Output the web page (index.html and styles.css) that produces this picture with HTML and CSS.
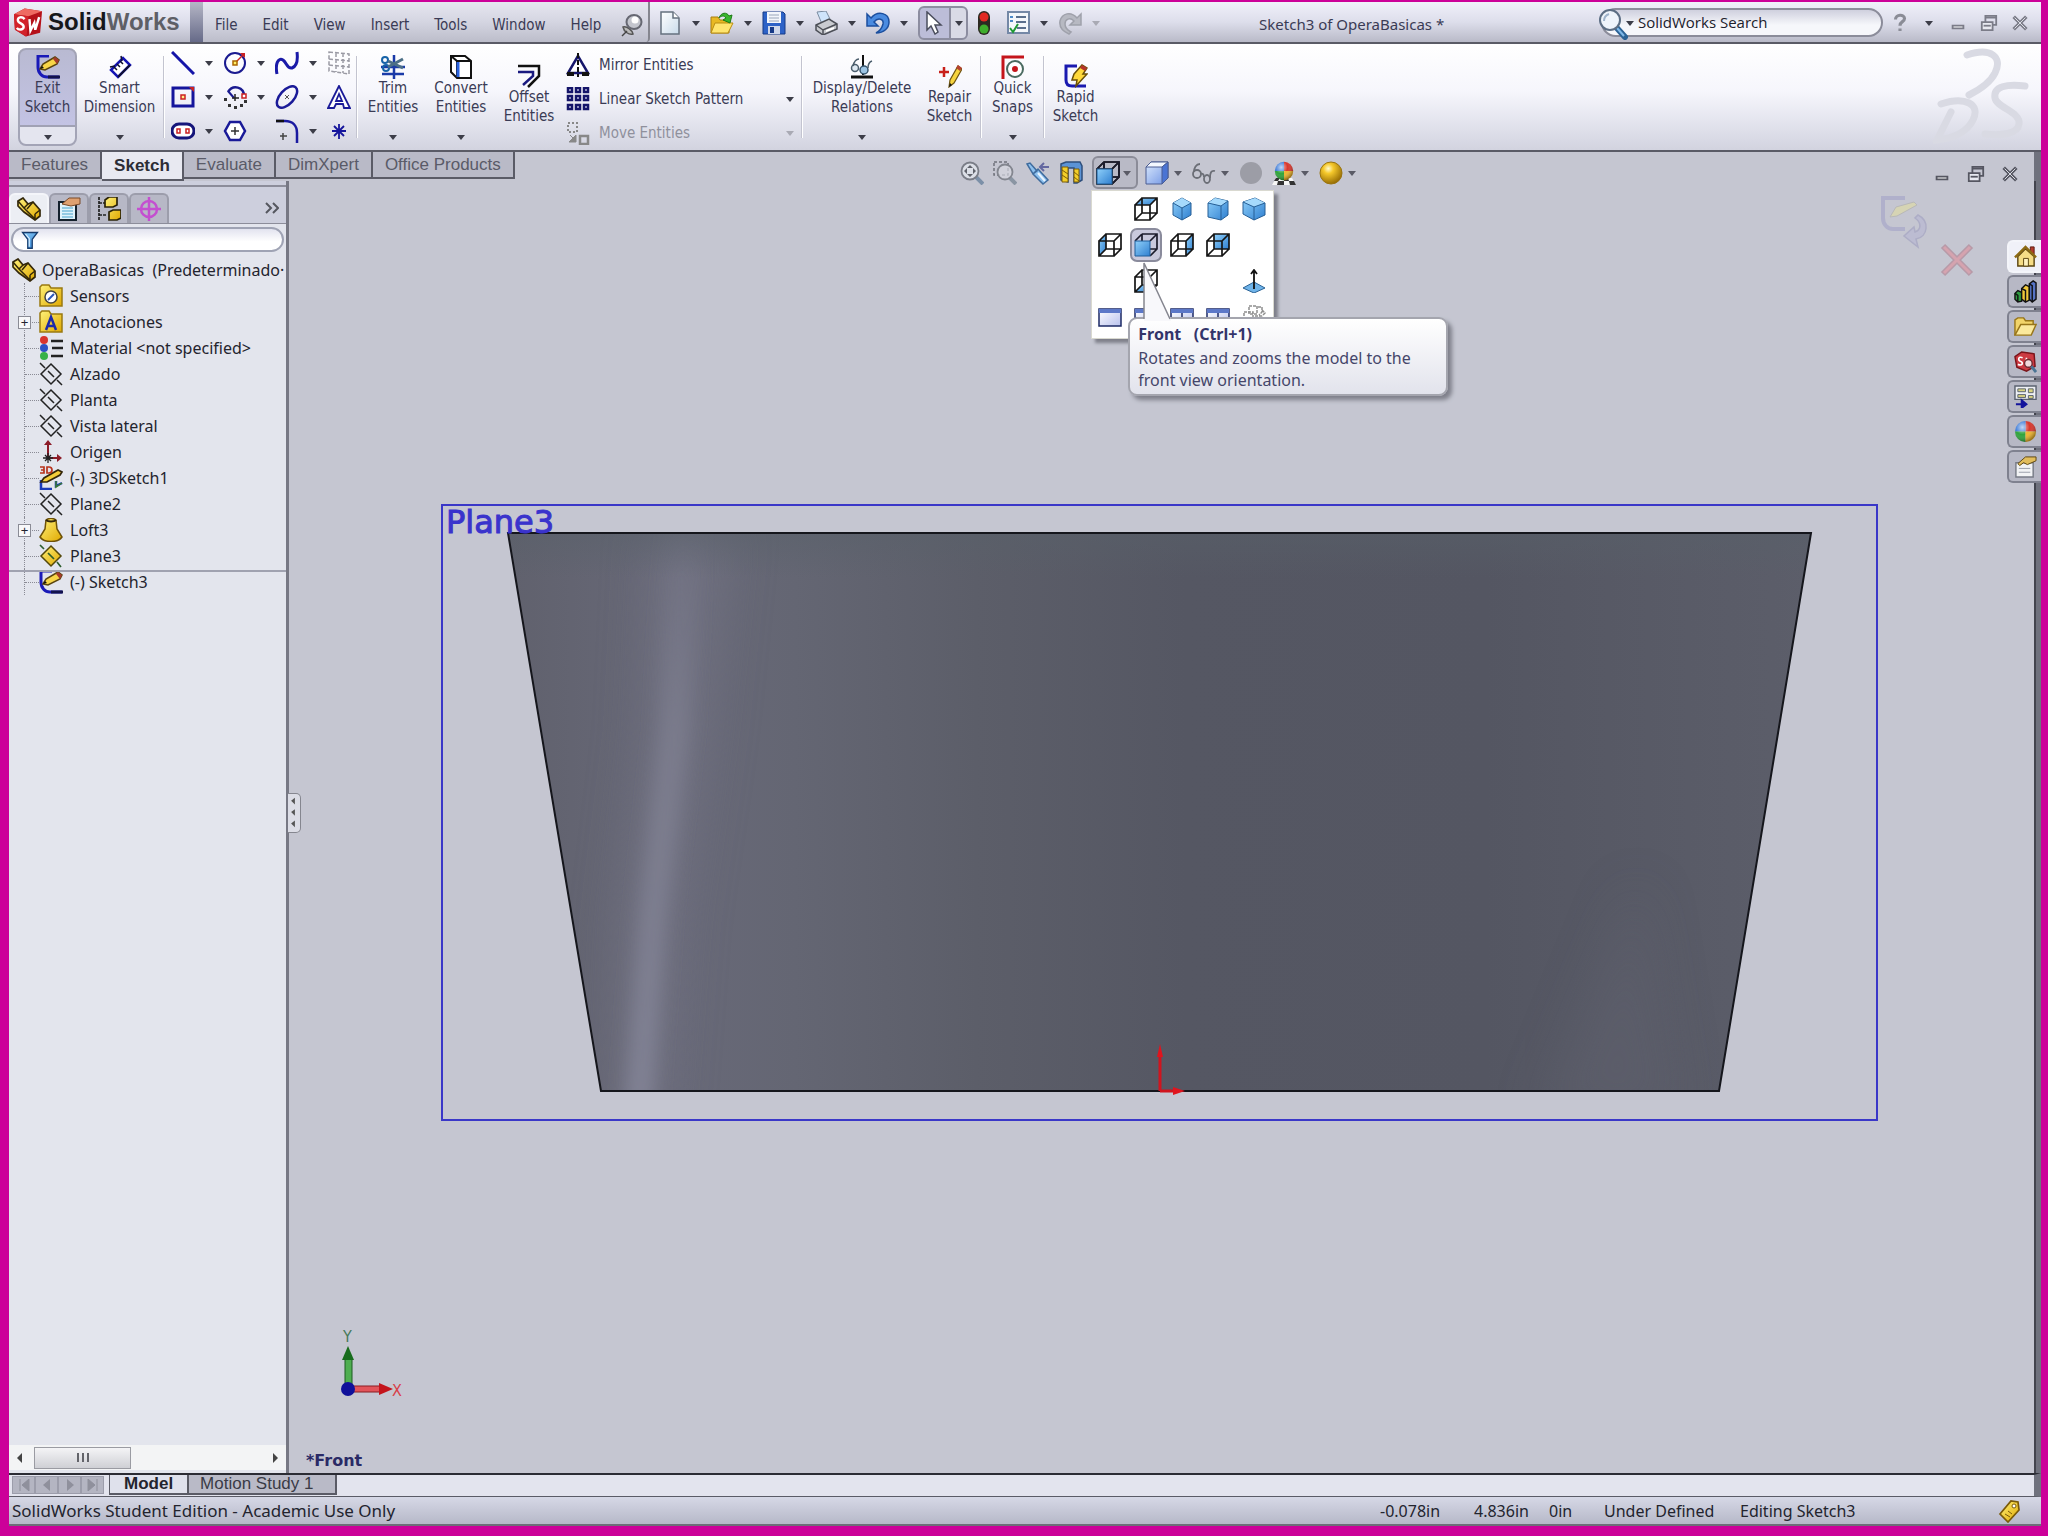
FILE: index.html
```html
<!DOCTYPE html>
<html lang="en">
<head>
  <meta charset="UTF-8" />
  <meta name="viewport" content="width=device-width, initial-scale=1.0"/>
  <title>SolidWorks - Sketch3 of OperaBasicas</title>
  <link rel="stylesheet" href="styles.css">
</head>
<body>

  <!-- Icon sprite -->
  <svg class="sprite" aria-hidden="true">
    <defs>
      <linearGradient id="g-blue" x1="0" y1="0" x2="1" y2="1">
        <stop offset="0" stop-color="#8fd0fa"/><stop offset="1" stop-color="#2f7fd0"/>
      </linearGradient>
      <linearGradient id="g-cube" x1="0" y1="0" x2="1" y2="1">
        <stop offset="0" stop-color="#dceafd"/><stop offset="1" stop-color="#6f94e4"/>
      </linearGradient>
      <linearGradient id="g-yellow" x1="0" y1="0" x2="1" y2="1">
        <stop offset="0" stop-color="#fff27a"/><stop offset="1" stop-color="#e0a800"/>
      </linearGradient>
      <linearGradient id="g-paper" x1="0" y1="0" x2="1" y2="1">
        <stop offset="0" stop-color="#ffffff"/><stop offset="1" stop-color="#c9dbea"/>
      </linearGradient>
      <linearGradient id="g-win" x1="0" y1="0" x2="1" y2="1">
        <stop offset="0" stop-color="#ffffff"/><stop offset="1" stop-color="#b9c2ee"/>
      </linearGradient>
      <radialGradient id="g-gold" cx=".38" cy=".3" r=".75">
        <stop offset="0" stop-color="#fffbd0"/><stop offset=".3" stop-color="#f6c92c"/><stop offset="1" stop-color="#8f6500"/>
      </radialGradient>
      <radialGradient id="g-shine" cx=".35" cy=".3" r=".7">
        <stop offset="0" stop-color="#fff" stop-opacity=".7"/><stop offset=".5" stop-color="#fff" stop-opacity="0"/><stop offset="1" stop-color="#000" stop-opacity=".35"/>
      </radialGradient>
    </defs>

    <symbol id="arrow" viewBox="0 0 14 14"><path d="M3 5h8l-4 5z" fill="currentColor"/></symbol>

    <symbol id="logo" viewBox="0 0 32 32">
      <path d="M1 8L12 2l18 3-2 22-15 4L2 24z" fill="#b5111a"/>
      <path d="M1 8L12 2l18 3-14 5z" fill="#ee6a62"/>
      <path d="M1 8l15 2-2 21L2 24z" fill="#d2222a"/>
      <path d="M12 13c-3-3-7-2-7 1 0 4 6 3 6 7 0 3-5 4-7 1" fill="none" stroke="#fff" stroke-width="2.500"/>
      <path d="M17 13l1 12 4-8 1 7 4-13" fill="none" stroke="#fff" stroke-width="2.500"/>
    </symbol>
    <symbol id="pin" viewBox="0 0 24 24">
      <path d="M3 14c4-1 9 3 10 7-4 1-9-2-10-7z" fill="#bbb" stroke="#555" stroke-width="1.500"/><path d="M7 18l-5 5" stroke="#444" stroke-width="1.500"/>
      <ellipse cx="14" cy="9" rx="7.500" ry="7" fill="#c4c6ce" stroke="#666872" stroke-width="2"/>
      <circle cx="15" cy="7" r="3.500" fill="#fff"/>
    </symbol>

    <!-- Standard toolbar -->
    <symbol id="new" viewBox="0 0 24 24"><path d="M3 1h12l6 6v16H3z" fill="url(#g-paper)" stroke="#66727f" stroke-width="1.500"/><path d="M15 1v6h6" fill="#fff" stroke="#66727f" stroke-width="1.500"/></symbol>
    <symbol id="open" viewBox="0 0 24 24"><path d="M1 22V6h7l2 3h9v13z" fill="#e8b923" stroke="#a87f10"/><path d="M1 22l4-10h18l-5 10z" fill="#ffe56f" stroke="#b98d12"/><path d="M9 7c2-6 8-6 10-2l3-1-2 8-7-3 3-2c-2-3-5-2-7 0z" fill="#39b52d" stroke="#1d7b17"/></symbol>
    <symbol id="save" viewBox="0 0 24 24"><path d="M1 1h20l2 2v20H1z" fill="#2d62c7" stroke="#173a86"/><path d="M5 1h14v11H5z" fill="#f3f6fb"/><path d="M7 4h10M7 7h10M7 10h10" stroke="#9aa6ba"/><path d="M6 15h12v8H6z" fill="#cfd8ea"/><path d="M8 16h4v6H8z" fill="#173a86"/></symbol>
    <symbol id="print" viewBox="0 0 24 24"><path d="M3 1l9-1 5 10-9 3z" fill="#cfe4fb" stroke="#7b8ca0"/><path d="M2 14l13-6 8 5v5L9 24l-7-5z" fill="#c9cbd0" stroke="#4c4f57" stroke-width="1.500"/><path d="M2 14l7 5 14-6M9 19v5" fill="none" stroke="#4c4f57" stroke-width="1.500"/><path d="M12 19l8-3v2l-8 3z" fill="#fff"/></symbol>
    <symbol id="undo" viewBox="0 0 24 24"><path d="M1 3v12h11l-4-4c4-5 10-3 9 2-1 4-3 7-7 9 8 0 13-5 13-11C23 2 12-1 5 7z" fill="#4a8be0" stroke="#1c4f9e" stroke-width="1.500"/></symbol>
    <symbol id="redo" viewBox="0 0 24 24"><path d="M23 3v11H12l4-4c-4-4-9-2-9 3 0 3 2 6 6 8l-2 2C4 20 1 16 2 10 4 2 13 0 19 7z" fill="#b7b9c2" stroke="#9fa1ab" stroke-width="1.500"/></symbol>
    <symbol id="cursor" viewBox="0 0 24 24"><path d="M6 1v18l4-4 4 8 3-2-3-7h6z" fill="#fff" stroke="#4a4d5c" stroke-width="1.500"/></symbol>
    <symbol id="light" viewBox="0 0 24 24"><rect x="6" y="0" width="12" height="24" rx="6" fill="#2c2a22"/><circle cx="12" cy="6" r="4.500" fill="#e02a23"/><circle cx="12" cy="18" r="4.500" fill="#3fae2c"/></symbol>
    <symbol id="options" viewBox="0 0 24 24"><path d="M2 1h21v21H2z" fill="#f4f7fb" stroke="#7488a6" stroke-width="2"/><path d="M4 6h3M4 10h3" stroke="#4c8ac9" stroke-width="2"/><path d="M10 6h10M10 11h10M11 17h9" stroke="#5a6f8d" stroke-width="2"/><path d="M4 17l3 4 5-8" fill="none" stroke="#1f9a34" stroke-width="2"/></symbol>
    <symbol id="lens" viewBox="0 0 32 32"><path d="M19 19l9 10" stroke="#2c6396" stroke-width="6" stroke-linecap="round"/><path d="M20 20l7 8" stroke="#7fb8e8" stroke-width="2"/><circle cx="13" cy="12" r="10" fill="#eef4fb" stroke="#5c6e84" stroke-width="2"/><path d="M7 13c0-4 2-6 5-7" fill="none" stroke="#9fb4cc" stroke-width="2"/></symbol>
    <symbol id="help" viewBox="0 0 20 20"><path d="M5 6c0-6 10-6 10-1 0 4-5 3-5 8M10 16v3" fill="none" stroke="#8a8c96" stroke-width="3.500"/></symbol>
    <symbol id="min" viewBox="0 0 20 20"><path d="M4 13h12v3H4z" fill="#fff" stroke="currentColor" stroke-width="2"/></symbol>
    <symbol id="restore" viewBox="0 0 20 20"><path d="M6 9V2h12v10h-4" fill="none" stroke="currentColor" stroke-width="2"/><path d="M6 4h12" stroke="currentColor" stroke-width="2"/><path d="M2 9h12v9H2z" fill="#e8e9f0" stroke="currentColor" stroke-width="2"/><path d="M4 13h8" stroke="currentColor" stroke-width="2"/></symbol>
    <symbol id="close" viewBox="0 0 20 20"><path d="M3 3l14 14M17 3L3 17" stroke="currentColor" stroke-width="4"/><path d="M4 4l12 12M16 4L4 16" stroke="#e8e9f0" stroke-width="1"/></symbol>

    <!-- Sketch ribbon -->
    <symbol id="sketch" viewBox="0 0 24 24"><path d="M13 1H2v11c0 6 4 10 9 10h12" fill="none" stroke="#1a1ab8" stroke-width="3"/><path d="M12 22h12" stroke="#12124c" stroke-width="3"/><path d="M4 14l3-5L19 2l4 3-2 4L9 15z" fill="#f7d548" stroke="#5a4510" stroke-width="1.500"/><path d="M19 2l4 3-2 4-4-5z" fill="#a53b2c"/><path d="M4 14l4-1-2-2z" fill="#111"/></symbol>
    <symbol id="dimension" viewBox="0 0 24 24"><path d="M3 15L15 3l7 7-12 12z" fill="#fff" stroke="#1414b4" stroke-width="2.500"/><path d="M10 22L22 10" stroke="#101030" stroke-width="2"/><path d="M6 12l3 3M9 9l3 3M12 6l3 3M2 12l5-1M13 1l1 5" stroke="#101030" stroke-width="1.500"/></symbol>
    <symbol id="line" viewBox="0 0 24 24"><path d="M1 1l22 22" stroke="#1515a8" stroke-width="3"/></symbol>
    <symbol id="circle" viewBox="0 0 24 24"><circle cx="12" cy="12" r="10" fill="none" stroke="#1a1a90" stroke-width="2"/><path d="M13 11l7-7" stroke="#c22" stroke-width="1.500"/><path d="M17 2l5 0v5z" fill="#c22"/><path d="M10 10h4v4h-4z" fill="#fe6" stroke="#a60" stroke-width="1.500"/></symbol>
    <symbol id="spline" viewBox="0 0 24 24"><path d="M2 23c-2-10 1-17 6-14 4 3 4 9 9 8 5-2 6-8 5-16" fill="none" stroke="#1a1aa8" stroke-width="3"/></symbol>
    <symbol id="grid" viewBox="0 0 24 24"><path d="M2 1l20 2v20L2 20zM9 2v19M16 2v20M2 8l20 2M2 14l20 2" fill="none" stroke="#9a9aa4" stroke-width="1.500" stroke-dasharray="4 2"/></symbol>
    <symbol id="rect" viewBox="0 0 24 24"><path d="M2 3h20v18H2z" fill="none" stroke="#15159c" stroke-width="3"/><path d="M10 10h4v4h-4z" fill="#fe8" stroke="#c22" stroke-width="1.500"/><path d="M18 2h5v5z" fill="#c22"/></symbol>
    <symbol id="arc" viewBox="0 0 24 24"><path d="M5 7C10-1 21 2 21 11" fill="none" stroke="#1a1a90" stroke-width="2.500"/><path d="M5 6l6 7" stroke="#1a1a90" stroke-width="2"/><path d="M9 13h7M12 9v7" stroke="#222" stroke-width="1.500"/><path d="M19 9h4v4h-4z" fill="#fff" stroke="#c22" stroke-width="1.500"/><path d="M1 13h3v3H1zM5 19h3v3H5zM11 21h3v3h-3zM17 19h3v3h-3zM21 15h3v3h-3z" fill="#333"/></symbol>
    <symbol id="ellipse" viewBox="0 0 24 24"><ellipse cx="12" cy="12" rx="13" ry="7" transform="rotate(-48 12 12)" fill="none" stroke="#1a1a98" stroke-width="2.500"/><path d="M10 10l4 4M14 10l-4 4" stroke="#555"/></symbol>
    <symbol id="text" viewBox="0 0 24 24"><path d="M12 1L1 23h6l2-4h7l1 4h6z" fill="#fff" stroke="#1a1a98" stroke-width="1.800"/><path d="M12 9l-3 7h6z" fill="#fff" stroke="#1a1a98" stroke-width="1.800"/></symbol>
    <symbol id="slot" viewBox="0 0 24 24"><rect x="1" y="5" width="22" height="14" rx="7" fill="#fff" stroke="#15157a" stroke-width="3"/><path d="M6 10h3v4H6zM15 10h3v4h-3z" fill="#fff" stroke="#c22" stroke-width="1.500"/></symbol>
    <symbol id="polygon" viewBox="0 0 24 24"><path d="M7 3h10l5 9-5 9H7l-5-9z" fill="#fff" stroke="#1a1a98" stroke-width="2.500"/><path d="M8 12h8M12 8v8" stroke="#333" stroke-width="1.500"/></symbol>
    <symbol id="fillet" viewBox="0 0 24 24"><path d="M1 2h9c8 0 12 5 12 12v10" fill="none" stroke="#1a1aa0" stroke-width="2.500"/><path d="M1 2h8" stroke="#111" stroke-width="2.500"/><path d="M5 17h7M8 14v7" stroke="#444" stroke-width="1.500"/></symbol>
    <symbol id="point" viewBox="0 0 24 24"><path d="M12 5v15M5 12h14M7 7l10 10M17 7L7 17" stroke="#15159c" stroke-width="1.800"/></symbol>
    <symbol id="trim" viewBox="0 0 24 24"><path d="M13 0v24M0 12h24M1 19h22" stroke="#1a3aa8" stroke-width="2.500"/><circle cx="4" cy="5" r="3" fill="none" stroke="#1763a8" stroke-width="2"/><circle cx="5" cy="13" r="3" fill="none" stroke="#1763a8" stroke-width="2"/><path d="M7 12l15-8M7 6l15 7" stroke="#4c6f86" stroke-width="3"/></symbol>
    <symbol id="convert" viewBox="0 0 24 24"><path d="M2 1h14l6 5v17H8L2 17z" fill="#fff" stroke="#111" stroke-width="2"/><path d="M2 1l6 5h14M8 6v17" fill="none" stroke="#111" stroke-width="2"/><path d="M9 7v15" stroke="#2a63e0" stroke-width="3"/></symbol>
    <symbol id="offset" viewBox="0 0 24 24"><path d="M1 2h21v10L11 23" fill="none" stroke="#111" stroke-width="2.500"/><path d="M1 8h15v4L6 21" fill="none" stroke="#1a1a80" stroke-width="2.500"/></symbol>
    <symbol id="mirror" viewBox="0 0 24 24"><path d="M12 3L2 20h20z" fill="#fff" stroke="#15156a" stroke-width="2.500"/><path d="M1 21h7M16 21h7" stroke="#111" stroke-width="4"/><path d="M12 0v24" stroke="#111" stroke-width="2" stroke-dasharray="5 2"/></symbol>
    <symbol id="pattern" viewBox="0 0 24 24"><g fill="#eef" stroke="#15156a" stroke-width="2.500"><path d="M2 1h4v4H2zM10 1h4v4h-4zM18 1h4v4h-4zM2 9h4v4H2zM10 9h4v4h-4zM18 9h4v4h-4zM2 18h4v4H2zM10 18h4v4h-4zM18 18h4v4h-4z"/></g></symbol>
    <symbol id="move" viewBox="0 0 24 24"><path d="M2 2h9v9H2z" fill="none" stroke="#888" stroke-width="2" stroke-dasharray="2 2"/><path d="M14 15h8v8h-8z" fill="none" stroke="#888" stroke-width="2.500"/><path d="M4 14l4 4M10 14v7H3z" fill="#888" stroke="#888"/></symbol>
    <symbol id="relations" viewBox="0 0 24 24"><path d="M1 22h22" stroke="#111" stroke-width="3"/><path d="M13 0v20" stroke="#111" stroke-width="2"/><circle cx="5" cy="13" r="3.500" fill="#dfe9f2" stroke="#4b5d6c" stroke-width="1.500"/><circle cx="14" cy="15" r="4" fill="#9cc4e4" stroke="#35536c" stroke-width="1.500"/><path d="M3 11c1-4 3-7 6-7M18 13c0-4 1-6 4-7" fill="none" stroke="#4b5d6c" stroke-width="1.500"/></symbol>
    <symbol id="repair" viewBox="0 0 24 24"><path d="M1 8h10M6 3v10" stroke="#c8201a" stroke-width="2.500"/><path d="M11 23l1-7 8-14 4 3-8 14z" fill="#f6d43e" stroke="#6f5510" stroke-width="1.200"/><path d="M20 1l4 3-2 3-4-3z" fill="#b5432f"/><path d="M11 23l1-4 2 2z" fill="#111"/></symbol>
    <symbol id="snaps" viewBox="0 0 24 24"><path d="M2 24V2h21" fill="none" stroke="#c4151b" stroke-width="3"/><circle cx="14" cy="14" r="8" fill="#fff" stroke="#4a6a60" stroke-width="2"/><circle cx="14" cy="14" r="3" fill="#c4151b"/></symbol>
    <symbol id="rapid" viewBox="0 0 24 24"><path d="M13 2H2v14c0 4 2 6 6 6h14" fill="none" stroke="#1a1ab0" stroke-width="3"/><path d="M10 10l8-9 5 3-4 6h4L12 22l1-6H8z" fill="#ffd93b" stroke="#6a4f08" stroke-width="1.500"/><path d="M18 1l5 3-2 3-5-3z" fill="#b5332a"/></symbol>

    <!-- View toolbar -->
    <symbol id="zoomfit" viewBox="0 0 24 24"><path d="M15 15l8 8" stroke="#7c90a8" stroke-width="4"/><circle cx="10" cy="10" r="8.500" fill="#dcdfe7" stroke="#7a7d87" stroke-width="1.800"/><path d="M10 4l3 3H7zM10 16l3-3H7zM4 10l3-3v6zM16 10l-3-3v6z" fill="#5f626b"/></symbol>
    <symbol id="zoomarea" viewBox="0 0 24 24"><path d="M16 16l7 7" stroke="#8a95a3" stroke-width="4"/><path d="M1 1h14v13H1z" fill="none" stroke="#6f727b" stroke-width="1.500" stroke-dasharray="3 2"/><circle cx="12" cy="11" r="7.500" fill="#d5d7df" fill-opacity=".7" stroke="#83868f" stroke-width="1.800"/></symbol>
    <symbol id="prevview" viewBox="0 0 24 24"><path d="M1 3l3-1 7 8-4 3zM7 13l5-5 10 11-5 4z" fill="#8dc0ee" stroke="#3f6c9e" stroke-width="1.500"/><path d="M12 12l7 8" stroke="#e8f4ff" stroke-width="2"/><path d="M14 6h9M18 2l-4 4 4 4" fill="none" stroke="#6468a0" stroke-width="2"/></symbol>
    <symbol id="section" viewBox="0 0 24 24"><path d="M2 3l5-2h14l2 4v14l-5 3h-3V7H9v14l-7-2z" fill="#5b93d6" stroke="#2e4f7c" stroke-width="1.500"/><path d="M3 6h6v15H3zM15 8h5v13h-5z" fill="#f2cf2a" stroke="#7c5d08"/><path d="M3 9l6 4M3 14l6 4M15 11l5 4M15 16l5 4" stroke="#7c5d08"/></symbol>
    <symbol id="wire" viewBox="0 0 24 24"><path d="M1 8h15v15H1zM8 1h15v15H8zM1 8l7-7M16 8l7-7M1 23l7-7M16 23l7-7" fill="none" stroke="#151515" stroke-width="1.700"/></symbol>
    <symbol id="v-front" viewBox="0 0 24 24"><path d="M8 1h15v15l-7 7M8 1L1 8M23 1l-7 7M8 1v8M16 16h7" fill="none" stroke="#1c1c2c" stroke-width="1.700"/><path d="M1 8h15v15H1z" fill="url(#g-blue)" stroke="#1f5c9a"/></symbol>
    <symbol id="v-top" viewBox="0 0 24 24"><path d="M1 8l7-7h15l-7 7z" fill="url(#g-blue)"/><use href="#wire"/></symbol>
    <symbol id="v-left" viewBox="0 0 24 24"><path d="M1 8l7-7v15l-7 7z" fill="url(#g-blue)"/><use href="#wire"/></symbol>
    <symbol id="v-right" viewBox="0 0 24 24"><path d="M16 8l7-7v15l-7 7z" fill="url(#g-blue)"/><use href="#wire"/></symbol>
    <symbol id="v-back" viewBox="0 0 24 24"><path d="M8 1h15v15H8z" fill="url(#g-blue)"/><use href="#wire"/></symbol>
    <symbol id="v-bottom" viewBox="0 0 24 24"><path d="M1 23l7-7h15l-7 7z" fill="url(#g-blue)"/><use href="#wire"/></symbol>
    <symbol id="v-iso" viewBox="0 0 24 24"><path d="M12 1l9 5v12l-9 5-9-5V6z" fill="url(#g-blue)" stroke="#265f96"/><path d="M12 1l9 5-9 5-9-5z" fill="#a6dafc"/><path d="M3 6l9 5 9-5M12 11v12" fill="none" stroke="#265f96"/></symbol>
    <symbol id="v-dim" viewBox="0 0 24 24"><path d="M9 1l13 3v14l-7 5-13-3V6z" fill="url(#g-blue)" stroke="#265f96"/><path d="M9 1l13 3-7 5L2 6z" fill="#a6dafc"/><path d="M2 6l13 3 7-5M15 9v14" fill="none" stroke="#265f96"/></symbol>
    <symbol id="v-tri" viewBox="0 0 24 24"><path d="M13 1l10 5v12l-11 5-11-6V5z" fill="url(#g-blue)" stroke="#265f96"/><path d="M13 1l10 5-11 4L1 5z" fill="#a6dafc"/><path d="M1 5l11 5 11-4M12 10v13" fill="none" stroke="#265f96"/></symbol>
    <symbol id="normal" viewBox="0 0 24 24"><path d="M1 19l11-6 11 6-11 5z" fill="#6fb4ea" stroke="#2a6295"/><path d="M12 20V2M9 5l3-4 3 4" fill="none" stroke="#111" stroke-width="1.800"/></symbol>
    <symbol id="win1" viewBox="0 0 24 24"><path d="M1 4h22v17H1z" fill="url(#g-win)" stroke="#1c2a66" stroke-width="1.500"/><path d="M1 4h22v4H1z" fill="#5c78c8"/></symbol>
    <symbol id="win2" viewBox="0 0 24 24"><use href="#win1"/><path d="M1 13h22" stroke="#1c2a66" stroke-width="1.500"/></symbol>
    <symbol id="win3" viewBox="0 0 24 24"><use href="#win1"/><path d="M12 8v13" stroke="#1c2a66" stroke-width="1.500"/></symbol>
    <symbol id="win4" viewBox="0 0 24 24"><use href="#win3"/><path d="M1 13h22" stroke="#1c2a66" stroke-width="1.500"/></symbol>
    <symbol id="link" viewBox="0 0 24 24"><path d="M7 1h8v8H7zM2 7h9v9H2zM16 2h4v5l-3 3M20 5l3 3-3 3M13 11h8" fill="none" stroke="#8f8f8f" stroke-width="1.500" stroke-dasharray="3 1"/></symbol>
    <symbol id="shaded" viewBox="0 0 24 24"><path d="M1 6l5-5h17v16l-6 6H1z" fill="url(#g-cube)" stroke="#4a5c92"/><path d="M1 6l5-5h17l-6 5z" fill="#f3f8ff" stroke="#4a5c92"/><path d="M17 6l6-5v16l-6 6z" fill="#4a74d4" stroke="#4a5c92"/></symbol>
    <symbol id="glasses" viewBox="0 0 24 24"><g fill="none" stroke="#6b6e76" stroke-width="1.800"><circle cx="5" cy="13" r="4"/><ellipse cx="15" cy="18" rx="3" ry="4"/><path d="M2 11c0-4 2-8 6-8M9 13c1-1 3 0 3 3M18 17c0-5 1-8 5-7"/></g></symbol>
    <symbol id="ball" viewBox="0 0 24 24"><circle cx="12" cy="12" r="11" fill="#9c9da6"/></symbol>
    <symbol id="beach" viewBox="0 0 24 24"><path d="M12 12V1a11 11 0 0 1 11 11z" fill="#d8362c"/><path d="M12 12V1A11 11 0 0 0 1 12z" fill="#3a7ad8"/><path d="M12 12H1a11 11 0 0 0 11 11z" fill="#2fa43c"/><path d="M12 12h11a11 11 0 0 1-11 11z" fill="#f0b52c"/><circle cx="12" cy="12" r="11" fill="url(#g-shine)"/></symbol>
    <symbol id="scene" viewBox="0 0 24 24"><path d="M4 17h16l4 7H0z" fill="#f6f6f6"/><path d="M4 17h4l-2 3H2zM12 17h4l1 3h-5zM6 20h6v4H5zM17 20h5l2 4h-6z" fill="#333"/><use href="#beach" x="2" y="0" width="20" height="20"/></symbol>
    <symbol id="gold" viewBox="0 0 24 24"><circle cx="12" cy="12" r="11" fill="url(#g-gold)" stroke="#9a7410"/></symbol>

    <!-- Feature tree -->
    <symbol id="part" viewBox="0 0 24 24"><path d="M1 4l5-3 5 6 5-2 7 8v6l-5 4L7 15 1 9z" fill="url(#g-yellow)" stroke="#33270a" stroke-width="1.700"/><path d="M1 4l6 7 11 11M7 11l4-4M18 17l5-4M18 17v6M10 12l6-7" fill="none" stroke="#33270a" stroke-width="1.500"/></symbol>
    <symbol id="property" viewBox="0 0 24 24"><path d="M2 5h17v18H2z" fill="#dff2fb" stroke="#14202c" stroke-width="2"/><path d="M5 11h11M5 14h11M5 17h11M5 20h11" stroke="#49a3cc"/><path d="M5 7l7-6h11v6l-9 2z" fill="#dfa070" stroke="#7a4a28"/></symbol>
    <symbol id="config" viewBox="0 0 24 24"><path d="M2 0v24M2 6h6M2 18h8" stroke="#222" stroke-width="1.700" stroke-dasharray="3 1"/><path d="M8 3l4-3h8v8l-4 2H8zM12 15l4-2h8v8l-4 2h-8z" fill="url(#g-yellow)" stroke="#2a2208" stroke-width="1.700"/></symbol>
    <symbol id="dimx" viewBox="0 0 24 24"><circle cx="12" cy="12" r="8" fill="none" stroke="#c44fd0" stroke-width="2.500"/><path d="M12 0v24M0 12h24" stroke="#c44fd0" stroke-width="2.500"/></symbol>
    <symbol id="funnel" viewBox="0 0 24 24"><path d="M2 2h20l-7 9v12H9V11z" fill="url(#g-blue)" stroke="#173c6c" stroke-width="1.700"/><path d="M6 4l5 6v11" fill="none" stroke="#dff1ff" stroke-width="1.500"/></symbol>
    <symbol id="folder" viewBox="0 0 24 24"><path d="M1 22V3l2-2h7l2 3h11v18z" fill="url(#g-yellow)" stroke="#9a7a10" stroke-width="1.500"/></symbol>
    <symbol id="sensors" viewBox="0 0 24 24"><use href="#folder"/><circle cx="12" cy="13" r="6" fill="#fff" stroke="#444" stroke-width="1.500"/><path d="M9 16l6-6" stroke="#2a55b8" stroke-width="2"/></symbol>
    <symbol id="annotations" viewBox="0 0 24 24"><use href="#folder"/><path d="M7 20l5-13 5 13M9 16h6" fill="none" stroke="#1c2aa8" stroke-width="2.500"/></symbol>
    <symbol id="material" viewBox="0 0 24 24"><circle cx="5" cy="4" r="4" fill="#d8332c"/><circle cx="5" cy="12" r="4" fill="#2b50c4"/><circle cx="5" cy="20" r="4" fill="#36b148"/><path d="M12 5h12M13 12h11M12 20h12" stroke="#222" stroke-width="2.500"/></symbol>
    <symbol id="plane" viewBox="0 0 24 24"><path d="M12 2l10 10-10 10L2 12z" fill="none" stroke="#222" stroke-width="1.500"/><path d="M1 1l5 5M9 9l6 6M18 18l5 5" stroke="#222" stroke-width="1.500"/></symbol>
    <symbol id="planesel" viewBox="0 0 24 24"><path d="M12 2l10 10-10 10L2 12z" fill="url(#g-yellow)" stroke="#54480a" stroke-width="1.500"/><path d="M1 1l4 4M9 9l6 6M18 18l4 5" stroke="#2c5c2c" stroke-width="1.700"/></symbol>
    <symbol id="origin" viewBox="0 0 24 24"><path d="M9 18V3M9 18h12" stroke="#8c1c28" stroke-width="2"/><path d="M5 5l4-5 4 5zM18 14l5 4-5 4z" fill="#8c1c28"/><path d="M4 18h10M9 13v10M6 15l6 6M12 15l-6 6" stroke="#222" stroke-width="1.300"/></symbol>
    <symbol id="sketch3d" viewBox="0 0 24 24"><path d="M2 14v9h11M17 15v5l6-3" fill="none" stroke="#1a3ab8" stroke-width="2.500"/><path d="M17 15v6l6-4" fill="none" stroke="#3a7a30" stroke-width="1.500"/><path d="M2 16l3-4L19 4l4 2-2 3L8 16z" fill="#f3cd3a" stroke="#33260a" stroke-width="1.700"/><path d="M1 1h4v6H1M2 4h3M8 1v6h2c4 0 4-6 0-6z" fill="none" stroke="#b8331c" stroke-width="1.700"/></symbol>
    <symbol id="loft" viewBox="0 0 24 24"><path d="M7 2c3-2 7-2 10 0l1 9 5 8c-4 6-18 6-22 0l5-8z" fill="url(#g-yellow)" stroke="#6e5208" stroke-width="1.500"/><path d="M7 2c2 2 8 2 10 0" fill="none" stroke="#33260a" stroke-width="2"/></symbol>

    <!-- Task pane -->
    <symbol id="home" viewBox="0 0 24 24"><path d="M17 2h4v8h-4z" fill="#b33c2c" stroke="#5c1a10"/><path d="M4 12v10h17V12l-9-8z" fill="#f6dd86" stroke="#5b4510" stroke-width="1.500"/><path d="M1 13L12 2l11 11" fill="none" stroke="#8c6a14" stroke-width="2.500"/><path d="M10 14h5v8h-5z" fill="#fff3c0" stroke="#5b4510"/></symbol>
    <symbol id="library" viewBox="0 0 24 24"><g stroke="#111" stroke-width="1.500"><path d="M1 14l3-3 4 2v9l-4 1-3-3z" fill="#2f9a40"/><path d="M8 9l4-4 4 2v14l-4 2-4-3z" fill="#f0c83a"/><path d="M16 4l4-3 3 2v17l-4 3-3-3z" fill="#5673c4"/><path d="M1 14l3 2v7M8 9l4 2v12M16 4l3 2v17" fill="none"/></g></symbol>
    <symbol id="explorer" viewBox="0 0 24 24"><path d="M1 21V5l3-2h6l2 3h8v4" fill="#f2d469" stroke="#98751a" stroke-width="1.500"/><path d="M1 21l6-11h16l-5 11z" fill="#fbe99c" stroke="#98751a" stroke-width="1.500"/></symbol>
    <symbol id="swsearch" viewBox="0 0 24 24"><path d="M1 7l7-5 13 2 1 13-9 5L3 18z" fill="#cc3a42" stroke="#7a141a" stroke-width="1.500"/><path d="M9 8c-5-2-5 3-2 4s2 5-3 3M13 8v9" fill="none" stroke="#fff" stroke-width="1.700"/><circle cx="15" cy="14" r="4" fill="#f0d9dc" stroke="#6f2a30" stroke-width="1.500"/><path d="M18 17l5 6" stroke="#4a7494" stroke-width="3"/></symbol>
    <symbol id="palette" viewBox="0 0 24 24"><path d="M1 1h22v14H1z" fill="#eef0f4" stroke="#5b6270" stroke-width="1.500"/><path d="M4 4h8v3H4zM4 10h8v3H4zM15 4h5v4h-5zM15 11h5v3h-5z" fill="#d9d380" stroke="#5b6270"/><path d="M2 20h8M8 16l5 4-5 4z" fill="#14149c" stroke="#14149c" stroke-width="2"/></symbol>
    <symbol id="custom" viewBox="0 0 24 24"><path d="M2 8h18v15H2z" fill="#f2f3f5" stroke="#777b86" stroke-width="1.500"/><path d="M5 14h12M5 18h12" stroke="#9a9eaa"/><path d="M4 9l8-7h11v4l-9 4-4-2-4 3z" fill="#e2bd5c" stroke="#5d460f"/></symbol>
    <symbol id="tag" viewBox="0 0 24 24"><path d="M3 15L14 2l7 1 1 8-11 12z" fill="url(#g-yellow)" stroke="#7a5a08" stroke-width="1.700"/><circle cx="17" cy="7" r="2" fill="#fff" stroke="#7a5a08"/><path d="M8 15l5 3M11 12l4 3" stroke="#7a5a08"/></symbol>
  </svg>

  <div class="app">

    <header class="titlebar">
      <div class="brand">
        <svg class="brand-icon"><use href="#logo"/></svg>
        <span><b>Solid</b>Works</span>
      </div>
      <div class="notch"></div>
      <nav class="menubar">
        <button>File</button>
        <button>Edit</button>
        <button>View</button>
        <button>Insert</button>
        <button>Tools</button>
        <button>Window</button>
        <button>Help</button>
        <button class="pin" aria-label="Pin menu"><svg class="icon"><use href="#pin"/></svg></button>
      </nav>
      <div class="quick">
        <button class="split" aria-label="New"><svg class="icon"><use href="#new"/></svg><svg class="arrow"><use href="#arrow"/></svg></button>
        <button class="split" aria-label="Open"><svg class="icon"><use href="#open"/></svg><svg class="arrow"><use href="#arrow"/></svg></button>
        <button class="split" aria-label="Save"><svg class="icon"><use href="#save"/></svg><svg class="arrow"><use href="#arrow"/></svg></button>
        <button class="split" aria-label="Print"><svg class="icon"><use href="#print"/></svg><svg class="arrow"><use href="#arrow"/></svg></button>
        <button class="split" aria-label="Undo"><svg class="icon"><use href="#undo"/></svg><svg class="arrow"><use href="#arrow"/></svg></button>
        <button class="select-tool" aria-label="Select"><svg class="icon"><use href="#cursor"/></svg><svg class="arrow"><use href="#arrow"/></svg></button>
        <button class="single" aria-label="Rebuild"><svg class="icon"><use href="#light"/></svg></button>
        <button class="split" aria-label="Options"><svg class="icon"><use href="#options"/></svg><svg class="arrow"><use href="#arrow"/></svg></button>
        <button class="split" aria-label="Redo" disabled><svg class="icon"><use href="#redo"/></svg><svg class="arrow"><use href="#arrow"/></svg></button>
      </div>
      <div class="doc-title">Sketch3 of OperaBasicas *</div>
      <div class="search">
        <svg class="lens"><use href="#lens"/></svg>
        <svg class="arrow"><use href="#arrow"/></svg>
        <input type="text" aria-label="SolidWorks Search" value="SolidWorks Search">
      </div>
      <div class="window-buttons">
        <button aria-label="Help"><svg><use href="#help"/></svg></button>
        <button aria-label="Help menu"><svg class="arrow"><use href="#arrow"/></svg></button>
        <button aria-label="Minimize"><svg><use href="#min"/></svg></button>
        <button aria-label="Restore"><svg><use href="#restore"/></svg></button>
        <button aria-label="Close"><svg><use href="#close"/></svg></button>
      </div>
    </header>

    <section class="ribbon">
      <button class="big exit active"><svg class="icon"><use href="#sketch"/></svg><span>Exit<br>Sketch</span><svg class="arrow"><use href="#arrow"/></svg></button>
      <button class="big dim"><svg class="icon"><use href="#dimension"/></svg><span>Smart<br>Dimension</span><svg class="arrow"><use href="#arrow"/></svg></button>
      <div class="sep"></div>
      <div class="tools">
        <button class="split" aria-label="Line"><svg class="icon"><use href="#line"/></svg><svg class="arrow"><use href="#arrow"/></svg></button>
        <button class="split" aria-label="Circle"><svg class="icon"><use href="#circle"/></svg><svg class="arrow"><use href="#arrow"/></svg></button>
        <button class="split" aria-label="Spline"><svg class="icon"><use href="#spline"/></svg><svg class="arrow"><use href="#arrow"/></svg></button>
        <button aria-label="Area pattern"><svg class="icon"><use href="#grid"/></svg></button>
        <button class="split" aria-label="Rectangle"><svg class="icon"><use href="#rect"/></svg><svg class="arrow"><use href="#arrow"/></svg></button>
        <button class="split" aria-label="Arc"><svg class="icon"><use href="#arc"/></svg><svg class="arrow"><use href="#arrow"/></svg></button>
        <button class="split" aria-label="Ellipse"><svg class="icon"><use href="#ellipse"/></svg><svg class="arrow"><use href="#arrow"/></svg></button>
        <button aria-label="Text"><svg class="icon"><use href="#text"/></svg></button>
        <button class="split" aria-label="Slot"><svg class="icon"><use href="#slot"/></svg><svg class="arrow"><use href="#arrow"/></svg></button>
        <button class="split" aria-label="Polygon"><svg class="icon"><use href="#polygon"/></svg></button>
        <button class="split" aria-label="Fillet"><svg class="icon"><use href="#fillet"/></svg><svg class="arrow"><use href="#arrow"/></svg></button>
        <button aria-label="Point"><svg class="icon"><use href="#point"/></svg></button>
      </div>
      <div class="sep"></div>
      <button class="big mid"><svg class="icon"><use href="#trim"/></svg><span>Trim<br>Entities</span><svg class="arrow"><use href="#arrow"/></svg></button>
      <button class="big mid"><svg class="icon"><use href="#convert"/></svg><span>Convert<br>Entities</span><svg class="arrow"><use href="#arrow"/></svg></button>
      <button class="big mid low"><svg class="icon"><use href="#offset"/></svg><span>Offset<br>Entities</span></button>
      <div class="list">
        <button><svg class="icon"><use href="#mirror"/></svg><span>Mirror Entities</span></button>
        <button><svg class="icon"><use href="#pattern"/></svg><span>Linear Sketch Pattern</span><svg class="arrow"><use href="#arrow"/></svg></button>
        <button disabled><svg class="icon"><use href="#move"/></svg><span>Move Entities</span><svg class="arrow"><use href="#arrow"/></svg></button>
      </div>
      <div class="sep"></div>
      <button class="big wide"><svg class="icon"><use href="#relations"/></svg><span>Display/Delete<br>Relations</span><svg class="arrow"><use href="#arrow"/></svg></button>
      <button class="big low"><svg class="icon"><use href="#repair"/></svg><span>Repair<br>Sketch</span></button>
      <div class="sep"></div>
      <button class="big"><svg class="icon"><use href="#snaps"/></svg><span>Quick<br>Snaps</span><svg class="arrow"><use href="#arrow"/></svg></button>
      <div class="sep"></div>
      <button class="big low"><svg class="icon"><use href="#rapid"/></svg><span>Rapid<br>Sketch</span></button>
      <svg class="ds-mark" viewBox="0 0 100 96" aria-hidden="true">
        <g fill="none" stroke="#d9dae3" stroke-linecap="round" stroke-width="7">
          <path d="M34 7c24-8 36 2 28 18-5 10-14 16-26 22"/>
          <path d="M8 56c24-8 40 0 32 16-6 12-18 18-36 20l14-28"/>
          <path d="M92 38c-18-2-32 0-30 12 2 10 26 14 24 26-1 10-18 12-34 10"/>
        </g>
      </svg>
    </section>

    <div class="tabstrip">
      <div class="command-tabs">
        <button>Features</button>
        <button class="active">Sketch</button>
        <button>Evaluate</button>
        <button>DimXpert</button>
        <button>Office Products</button>
      </div>
      <div class="hud">
        <button class="single" aria-label="Zoom to fit"><svg class="icon"><use href="#zoomfit"/></svg></button>
        <button class="single" aria-label="Zoom to area"><svg class="icon"><use href="#zoomarea"/></svg></button>
        <button class="single" aria-label="Previous view"><svg class="icon"><use href="#prevview"/></svg></button>
        <button class="single" aria-label="Section view"><svg class="icon"><use href="#section"/></svg></button>
        <div class="orientation">
          <button class="orientation-btn" aria-label="View orientation"><svg class="icon"><use href="#wire"/><use href="#v-front"/></svg><svg class="arrow"><use href="#arrow"/></svg></button>
          <div class="orientation-menu">
            <i></i>
            <button aria-label="Top"><svg class="icon"><use href="#v-top"/></svg></button>
            <button aria-label="Isometric"><svg class="icon"><use href="#v-iso"/></svg></button>
            <button aria-label="Dimetric"><svg class="icon"><use href="#v-dim"/></svg></button>
            <button aria-label="Trimetric"><svg class="icon"><use href="#v-tri"/></svg></button>
            <button aria-label="Left"><svg class="icon"><use href="#v-left"/></svg></button>
            <button class="active" aria-label="Front"><svg class="icon"><use href="#v-front"/></svg></button>
            <button aria-label="Right"><svg class="icon"><use href="#v-right"/></svg></button>
            <button aria-label="Back"><svg class="icon"><use href="#v-back"/></svg></button>
            <i></i>
            <i></i>
            <button aria-label="Bottom"><svg class="icon"><use href="#v-bottom"/></svg></button>
            <i></i>
            <i></i>
            <button aria-label="Normal to"><svg class="icon"><use href="#normal"/></svg></button>
            <button aria-label="Single view"><svg class="icon"><use href="#win1"/></svg></button>
            <button aria-label="Two view horizontal"><svg class="icon"><use href="#win2"/></svg></button>
            <button aria-label="Two view vertical"><svg class="icon"><use href="#win3"/></svg></button>
            <button aria-label="Four view"><svg class="icon"><use href="#win4"/></svg></button>
            <button aria-label="Link views" disabled><svg class="icon"><use href="#link"/></svg></button>
          </div>
          <div class="tooltip" role="tooltip">
            <svg class="tooltip-tail" viewBox="0 0 30 60"><path d="M2 60V2l27 56v2z" fill="#f8f8fb"/><path d="M2 58V2l26 56" fill="none" stroke="#85868f" stroke-width="1.500"/></svg>
            <strong>Front &nbsp; (Ctrl+1)</strong>
            <p>Rotates and zooms the model to the front view orientation.</p>
          </div>
        </div>
        <button class="split" aria-label="Display style"><svg class="icon"><use href="#shaded"/></svg><svg class="arrow"><use href="#arrow"/></svg></button>
        <button class="split" aria-label="Hide or show items"><svg class="icon"><use href="#glasses"/></svg><svg class="arrow"><use href="#arrow"/></svg></button>
        <button class="single" aria-label="Edit appearance"><svg class="icon"><use href="#ball"/></svg></button>
        <button class="split" aria-label="Apply scene"><svg class="icon"><use href="#scene"/></svg><svg class="arrow"><use href="#arrow"/></svg></button>
        <button class="split" aria-label="View settings"><svg class="icon"><use href="#gold"/></svg><svg class="arrow"><use href="#arrow"/></svg></button>
      </div>
      <div class="window-buttons doc-buttons">
        <button aria-label="Minimize document"><svg><use href="#min"/></svg></button>
        <button aria-label="Restore document"><svg><use href="#restore"/></svg></button>
        <button aria-label="Close document"><svg><use href="#close"/></svg></button>
      </div>
    </div>

    <main class="workspace">
      <aside class="sidebar">
        <div class="panel-tabs">
          <button class="active" aria-label="Feature tree"><svg class="icon"><use href="#part"/></svg></button>
          <button aria-label="Properties"><svg class="icon"><use href="#property"/></svg></button>
          <button aria-label="Configurations"><svg class="icon"><use href="#config"/></svg></button>
          <button aria-label="DimXpert manager"><svg class="icon"><use href="#dimx"/></svg></button>
          <button class="more" aria-label="More tabs"><svg viewBox="0 0 14 12"><path d="M1 1l5 5-5 5M8 1l5 5-5 5" fill="none" stroke="#55575f" stroke-width="2"/></svg></button>
        </div>
        <div class="filter">
          <svg><use href="#funnel"/></svg>
          <input type="text" aria-label="Filter">
        </div>
        <div class="tree-root"><svg class="icon"><use href="#part"/></svg><span>OperaBasicas &nbsp;(Predeterminado·</span></div>
        <ul class="tree">
          <li><svg class="icon"><use href="#sensors"/></svg>Sensors</li>
          <li><button class="expand" aria-label="Expand">+</button><svg class="icon"><use href="#annotations"/></svg>Anotaciones</li>
          <li><svg class="icon"><use href="#material"/></svg>Material &lt;not specified&gt;</li>
          <li><svg class="icon"><use href="#plane"/></svg>Alzado</li>
          <li><svg class="icon"><use href="#plane"/></svg>Planta</li>
          <li><svg class="icon"><use href="#plane"/></svg>Vista lateral</li>
          <li><svg class="icon"><use href="#origin"/></svg>Origen</li>
          <li><svg class="icon"><use href="#sketch3d"/></svg>(-) 3DSketch1</li>
          <li><svg class="icon"><use href="#plane"/></svg>Plane2</li>
          <li><button class="expand" aria-label="Expand">+</button><svg class="icon"><use href="#loft"/></svg>Loft3</li>
          <li><svg class="icon"><use href="#planesel"/></svg>Plane3</li>
          <li class="rollback"><svg class="icon"><use href="#sketch"/></svg>(-) Sketch3</li>
        </ul>
        <div class="scrollbar">
          <button aria-label="Scroll left"><svg viewBox="0 0 10 10"><path d="M7 0v10L2 5z" fill="#444"/></svg></button>
          <div class="thumb"><i></i><i></i><i></i></div>
          <button aria-label="Scroll right"><svg viewBox="0 0 10 10"><path d="M3 0v10l5-5z" fill="#444"/></svg></button>
        </div>
        <button class="grip" aria-label="Collapse panel"><svg viewBox="0 0 10 40"><path d="M7 4v7L3 7zM7 16v7l-4-4zM7 28v7l-4-4z" fill="#555"/></svg></button>
      </aside>

      <div class="viewport">
        <svg class="scene" viewBox="0 0 1745 1292" role="img" aria-label="Loft model, front view">
          <defs>
            <linearGradient id="body" x1="0" x2="1">
              <stop offset="0" stop-color="#60616d"/>
              <stop offset=".13" stop-color="#686978"/>
              <stop offset=".22" stop-color="#646673"/>
              <stop offset=".36" stop-color="#5c5e69"/>
              <stop offset=".52" stop-color="#555763"/>
              <stop offset=".75" stop-color="#545662"/>
              <stop offset="1" stop-color="#5c5e6a"/>
            </linearGradient>
            <linearGradient id="top-shade" x1="0" y1="0" x2="0" y2="1">
              <stop offset="0" stop-color="#586069" stop-opacity=".5"/>
              <stop offset=".08" stop-color="#586069" stop-opacity="0"/>
            </linearGradient>
            <linearGradient id="glow" x1="0" y1="0" x2="0" y2="1">
              <stop offset="0" stop-color="#7b7c8d" stop-opacity=".1"/>
              <stop offset=".35" stop-color="#7f8091" stop-opacity=".75"/>
              <stop offset="1" stop-color="#858699" stop-opacity=".85"/>
            </linearGradient>
            <filter id="soft" x="-100%" y="-20%" width="300%" height="140%"><feGaussianBlur stdDeviation="9"/></filter>
            <filter id="softer" x="-100%" y="-20%" width="300%" height="140%"><feGaussianBlur stdDeviation="24"/></filter>
            <clipPath id="solid"><path d="M219 352H1522L1430 910H312z"/></clipPath>
          </defs>
          <rect x="153" y="324" width="1435" height="615" fill="none" stroke="#3a37c8" stroke-width="2"/>
          <g clip-path="url(#solid)">
            <path d="M219 352H1522L1430 910H312z" fill="url(#body)"/>
            <path d="M365 340h76l-22 210-28 190-16 210h-54l10-210 24-190z" fill="#747585" filter="url(#softer)" opacity=".6"/>
            <path d="M378 340h34L400 550 378 733 362 950h-28L350 733 370 550z" fill="url(#glow)" filter="url(#soft)"/>
            <path d="M1350 700l40 240h-140z" fill="#5e606d" filter="url(#softer)" opacity=".6"/>
            <path d="M219 352H1522L1430 910H312z" fill="url(#top-shade)"/>
          </g>
          <path d="M219 352H1522L1430 910H312z" fill="none" stroke="#15161c" stroke-width="2"/>
          <text class="plane-label" x="157" y="352">Plane3</text>
          <path d="M871 910V872M871 910h14" stroke="#d0141e" stroke-width="3"/>
          <path d="M868 876l3-13 3 13zM884 906l12 4-12 4z" fill="#e0141e"/>
          <g class="triad">
            <path d="M56 1178h7v26h-7z" fill="#4fae50" stroke="#1c5c20"/>
            <path d="M53 1179l6-14 6 14z" fill="#176c1c"/>
            <path d="M64 1205h28v6H64z" fill="#e2545a" stroke="#8a1c22"/>
            <path d="M90 1202l14 6-14 6z" fill="#c4141c"/>
            <circle cx="59" cy="1208" r="7" fill="#10109a"/>
            <text class="axis-y" x="54" y="1161">Y</text>
            <text class="axis-x" x="103" y="1215">X</text>
          </g>
          <text class="view-name" x="17" y="1285">*Front</text>
        </svg>
        <div class="confirm">
          <button aria-label="Accept sketch"><svg viewBox="0 0 52 54"><path d="M25 3H3v20c0 6 4 11 10 11h12" fill="none" stroke="#b0b0cb" stroke-width="4"/><path d="M10 22l6-10 18-5 3 3-20 11z" fill="#d6d4b4" stroke="#b8b8b8"/><path d="M38 20c12 6 10 22-2 24l2 8-14-11 10-9 1 5c6-2 7-9 0-14z" fill="#bcbcd2" stroke="#adadc6" stroke-width="1.500"/></svg></button>
          <button class="cancel" aria-label="Cancel sketch"><svg viewBox="0 0 34 34"><path d="M3 3l28 28M31 3L3 31" stroke="#b79aa8" stroke-width="6"/><path d="M4 4l26 26M30 4L4 30" stroke="#d5a3af" stroke-width="3"/></svg></button>
        </div>
      </div>

      <div class="edge">
        <div class="task-tabs">
          <button class="active" aria-label="Resources"><svg class="icon"><use href="#home"/></svg></button>
          <button aria-label="Design library"><svg class="icon"><use href="#library"/></svg></button>
          <button aria-label="File explorer"><svg class="icon"><use href="#explorer"/></svg></button>
          <button aria-label="Search"><svg class="icon"><use href="#swsearch"/></svg></button>
          <button aria-label="View palette"><svg class="icon"><use href="#palette"/></svg></button>
          <button aria-label="Appearances"><svg class="icon"><use href="#beach"/></svg></button>
          <button aria-label="Custom properties"><svg class="icon"><use href="#custom"/></svg></button>
        </div>
      </div>
    </main>

    <div class="study-tabs">
      <div class="study-nav">
        <button aria-label="First" disabled><svg viewBox="0 0 12 12"><path d="M2 0v12M11 0v12L4 6z" fill="currentColor" stroke="currentColor"/></svg></button>
        <button aria-label="Previous" disabled><svg viewBox="0 0 12 12"><path d="M9 0v12L2 6z" fill="currentColor"/></svg></button>
        <button aria-label="Next" disabled><svg viewBox="0 0 12 12"><path d="M3 0v12l7-6z" fill="currentColor"/></svg></button>
        <button aria-label="Last" disabled><svg viewBox="0 0 12 12"><path d="M10 0v12M1 0v12l7-6z" fill="currentColor" stroke="currentColor"/></svg></button>
      </div>
      <button class="study active">Model</button>
      <button class="study">Motion Study 1</button>
    </div>

    <footer class="statusbar">
      <span class="edition">SolidWorks Student Edition - Academic Use Only</span>
      <span class="coord-x">-0.078in</span>
      <span class="coord-y">4.836in</span>
      <span class="coord-z">0in</span>
      <span class="state">Under Defined</span>
      <span class="editing">Editing Sketch3</span>
      <svg class="icon"><use href="#tag"/></svg>
    </footer>

  </div>

</body>
</html>
```
FILE: styles.css
```css
:root {
  --frame: #cc0099;
  --canvas: #c5c6d1;
  --panel: #e3e5ed;
  --line: #5a5b66;
  --text: #3a3b55;
  --ui: "DejaVu Sans Condensed", "DejaVu Sans", sans-serif;
  --tree: "Noto Sans", "Open Sans", sans-serif;
  --tab: "Liberation Sans", Arial, sans-serif;
}
* {
  box-sizing: border-box;
}
body {
  margin: 0;
  padding: 2px 7px 10px 9px;
  min-height: 100vh;
  display: flex;
  background: var(--frame);
  font-family: var(--ui);
  font-size: 15px;
  color: var(--text);
}
button {
  margin: 0;
  padding: 0;
  border: none;
  background: none;
  font: inherit;
  color: inherit;
}
svg {
  display: block;
  flex: none;
}
.sprite {
  position: absolute;
  width: 0;
  height: 0;
}
.icon {
  width: 24px;
  height: 24px;
}
.arrow {
  width: 14px;
  height: 14px;
  color: #3c3d48;
}
button:disabled {
  color: #8f909c;
}
button:disabled .arrow {
  color: #a9aab4;
}
.app {
  flex: 1;
  min-width: 0;
  display: flex;
  flex-direction: column;
  background: var(--canvas);
}
.split {
  display: flex;
  align-items: center;
}

/* Title bar */
.titlebar {
  display: flex;
  height: 42px;
  background: linear-gradient(#f0f0fa, #dddeeb 50%, #b9bac8);
  border-bottom: 2px solid var(--line);
}
.brand {
  width: 181px;
  padding-left: 4px;
  display: flex;
  align-items: center;
  gap: 4px;
  font: bold 24px var(--tab);
  color: #5e5f66;
}
.brand b {
  color: #16171b;
}
.brand-icon {
  width: 31px;
  height: 32px;
}
.notch {
  width: 13px;
  background: linear-gradient(#b5b6c6, #666a88);
}
.menubar {
  display: flex;
  align-items: center;
  gap: 25px;
  padding: 5px 4px 0 12px;
  background: linear-gradient(#e6e6f0, #d4d5e1 50%, #bcbdca);
  border-right: 2px solid #85868f;
  border-radius: 0 0 4px 0;
}
.menubar .pin {
  margin-left: -6px;
}
.quick {
  display: flex;
  align-items: center;
  padding: 2px 0 0 8px;
}
.quick .split,
.tools .split {
  width: 52px;
  gap: 7px;
}
.select-tool {
  display: flex;
  align-items: center;
  gap: 7px;
  width: 50px;
  height: 34px;
  margin-right: 4px;
  padding-left: 1px;
  border: 2px solid #8c8da0;
  border-radius: 6px;
  background: linear-gradient(90deg, #bcbdd8 29px, #8c8da0 29px, #8c8da0 31px, #d9dae6 31px);
}
.quick .single {
  width: 34px;
}
.doc-title {
  flex: 1;
  padding-top: 4px;
  line-height: 36px;
  text-align: center;
  font-family: var(--tree);
  white-space: nowrap;
}
.search {
  display: flex;
  align-items: center;
  width: 282px;
  height: 29px;
  margin: 6px 0 0 8px;
  border: 2px solid #8b8c9a;
  border-radius: 15px;
  background: linear-gradient(#cfd0de, #f6f7fb 60%);
}
.search .lens {
  width: 32px;
  height: 32px;
  margin: 2px -8px 0 -6px;
}
.search .arrow {
  margin-left: 2px;
}
.search input {
  flex: 1;
  min-width: 0;
  padding: 0 0 2px 1px;
  border: none;
  outline: none;
  background: none;
  font: 15px "Open Sans", sans-serif;
  color: #20212c;
}
.window-buttons {
  display: flex;
  align-items: center;
  color: #7b7c88;
}
.titlebar .window-buttons {
  width: 158px;
  padding: 2px 12px 0 8px;
  justify-content: space-between;
}
.window-buttons svg {
  width: 18px;
  height: 20px;
}
.window-buttons .arrow {
  width: 14px;
  height: 14px;
}

/* Ribbon */
.ribbon {
  display: flex;
  height: 108px;
  padding: 4px 8px 4px 9px;
  background: linear-gradient(#ffffff, #f6f6fc 45%, #dcdde8 85%, #d2d3df);
  border-bottom: 2px solid var(--line);
}
.big {
  display: flex;
  flex-direction: column;
  align-items: center;
  width: 59px;
  padding: 7px 0 2px;
  line-height: 19px;
  text-align: center;
  white-space: nowrap;
}
.big .arrow {
  margin-top: auto;
}
.big.low {
  padding-top: 16px;
}
.big.active {
  padding: 5px 0 0;
  border: 2px solid #a3a4b6;
  border-radius: 8px;
  background: linear-gradient(#b9bad2, #c3c3e4 80%, #a0a1b4 80%, #a0a1b4 82%, #e4e5ef 82%);
}
.big.dim {
  width: 85px;
}
.big.mid {
  width: 68px;
}
.big.wide {
  width: 116px;
}
.sep {
  width: 2px;
  margin: 8px 1px;
  border-left: 1px solid #c3c4d0;
  border-right: 1px solid #fff;
}
.tools {
  display: grid;
  grid-template-columns: 52px 52px 52px 26px;
  grid-auto-rows: 34px;
  align-items: center;
  margin: -2px 2px 0 5px;
}
.list {
  display: grid;
  grid-auto-rows: 34px;
  width: 234px;
  margin-right: 3px;
  padding-left: 3px;
}
.list button {
  display: flex;
  align-items: center;
  gap: 9px;
}
.list .arrow {
  margin-left: auto;
}
.ds-mark {
  width: 100px;
  height: 96px;
  margin-left: auto;
}

/* Command tabs and view toolbar */
.tabstrip {
  position: relative;
  z-index: 2;
  display: flex;
  align-items: flex-start;
  height: 29px;
  border-right: 7px solid #6f717d;
}
.command-tabs {
  display: flex;
  align-items: flex-start;
  font: 17px var(--tab);
  color: #5a5b68;
}
.command-tabs button {
  height: 27px;
  padding: 0 12px;
  border: solid var(--line);
  border-width: 0 2px 2px 0;
  background: #b9bac7;
}
.command-tabs .active {
  height: 29px;
  font-weight: bold;
  color: #2c2d36;
  background: #e8e9f1;
}
.hud {
  display: flex;
  align-items: center;
  gap: 7px;
  height: 33px;
  margin: 4px 0 0 22%;
}
.hud .single {
  width: 26px;
}
.hud .split {
  gap: 2px;
}
.hud .arrow {
  color: #5a5b66;
}
.orientation {
  position: relative;
}
.orientation-btn {
  display: flex;
  align-items: center;
  width: 46px;
  height: 33px;
  padding-left: 2px;
  border: 2px solid #8b8c98;
  border-radius: 6px;
  background: #b9bac6;
}
.orientation-menu {
  position: absolute;
  top: 34px;
  left: -1px;
  display: grid;
  grid-template-columns: repeat(5, 36px);
  grid-auto-rows: 36px;
  width: 183px;
  height: 149px;
  border: 1px solid #d9d9d0;
  background: #fff;
  box-shadow: 4px 4px 3px #7f808b;
}
.orientation-menu button {
  display: grid;
  place-items: center;
}
.orientation-menu .active {
  margin: 1px 2px;
  border: 2px solid #8a8b9c;
  border-radius: 7px;
  background: #c9c9dd;
}
.tooltip {
  position: absolute;
  top: 161px;
  left: 36px;
  width: 320px;
  height: 79px;
  padding: 4px 8px;
  border: 2px solid #a4a5ae;
  border-radius: 9px;
  background: linear-gradient(#ffffff, #e2e3ec);
  box-shadow: 4px 4px 4px #7f808b;
  font: 16px/22px var(--tree);
  color: #45466a;
}
.tooltip strong {
  display: block;
  margin-bottom: 2px;
  color: #33346a;
}
.tooltip p {
  margin: 0;
}
.tooltip-tail {
  position: absolute;
  top: -58px;
  left: 12px;
  width: 30px;
  height: 60px;
}
.doc-buttons {
  gap: 16px;
  margin: 12px 15px 0 auto;
  color: #555661;
}

/* Workspace */
.workspace {
  flex: 1;
  min-height: 0;
  display: flex;
}
.sidebar {
  position: relative;
  display: flex;
  flex-direction: column;
  width: 280px;
  padding-top: 4px;
  border-right: 3px solid #777884;
  background: linear-gradient(#cdcfdd 42px, var(--panel) 42px);
  font: 16px var(--tree);
  color: #23242e;
}
.panel-tabs {
  display: flex;
  height: 39px;
  padding: 6px 2px 0 0;
  border-top: 2px solid #8c8d9a;
  border-bottom: 1px solid #8c8d9a;
}
.panel-tabs button {
  display: grid;
  place-items: center;
  width: 40px;
  height: 30px;
  border: 2px solid #9c9dab;
  border-bottom: none;
  border-radius: 6px 6px 0 0;
  background: #b7b8c6;
}
.panel-tabs .active {
  border-color: #f4f5fa;
  background: #eceef4;
}
.panel-tabs .more {
  width: 24px;
  margin-left: auto;
  border: none;
  background: none;
}
.more svg {
  width: 14px;
  height: 12px;
}
.filter {
  display: flex;
  align-items: center;
  height: 25px;
  margin: 3px 2px 5px;
  padding-left: 8px;
  border: 2px solid #9fa3b4;
  border-radius: 13px;
  background: linear-gradient(#e2e3ef, #ffffff 60%);
}
.filter svg {
  width: 18px;
  height: 18px;
}
.filter input {
  flex: 1;
  min-width: 0;
  border: none;
  outline: none;
  background: none;
  font: inherit;
}
.tree-root {
  display: flex;
  align-items: center;
  gap: 6px;
  height: 26px;
  padding-left: 3px;
  overflow: hidden;
  white-space: nowrap;
}
.tree {
  margin: 0;
  padding: 0 0 0 15px;
  list-style: none;
}
.tree li {
  position: relative;
  display: flex;
  align-items: center;
  gap: 7px;
  height: 26px;
  border-left: 1px dotted #8a8b95;
  white-space: nowrap;
}
.tree li::before {
  content: "";
  width: 14px;
  margin-right: -7px;
  border-top: 1px dotted #8a8b95;
}
.expand {
  position: absolute;
  left: -7px;
  width: 13px;
  height: 13px;
  border: 1px solid #8a8b95;
  background: #f8f8fa;
  font: 13px/9px var(--tab);
}
.rollback::after {
  content: "";
  position: absolute;
  top: 1px;
  left: -16px;
  right: 0;
  height: 2px;
  background: #a0a2b0;
}
.scrollbar {
  display: flex;
  align-items: center;
  height: 25px;
  margin: auto 0 3px;
  padding: 0 6px;
  background: #f3f4f5;
}
.scrollbar svg {
  width: 10px;
  height: 10px;
}
.scrollbar button:last-child {
  margin-left: auto;
}
.thumb {
  display: flex;
  justify-content: center;
  gap: 3px;
  width: 97px;
  height: 22px;
  margin-left: 9px;
  padding-top: 5px;
  border: 1px solid #9a9ba2;
  background: linear-gradient(#f4f4f6, #cfd0d5);
}
.thumb i {
  width: 2px;
  height: 9px;
  background: #63646a;
}
.grip {
  position: absolute;
  z-index: 1;
  top: 612px;
  right: -15px;
  width: 13px;
  height: 40px;
  border: 1px solid #85868f;
  border-left: none;
  border-radius: 0 5px 5px 0;
  background: #dcdde6;
}
.grip svg {
  width: 10px;
  height: 38px;
}
.viewport {
  position: relative;
  flex: 1;
  min-width: 0;
}
.viewport .scene {
  width: 100%;
  height: 100%;
}
.plane-label {
  font: 32px "DejaVu Sans", sans-serif;
  fill: #3a33cc;
  stroke: #3a33cc;
  stroke-width: 1px;
}
.axis-y,
.axis-x {
  font: 16px "DejaVu Sans Condensed", sans-serif;
  fill: #46795a;
}
.axis-x {
  fill: #d8404a;
}
.view-name {
  font: bold 16px "DejaVu Sans", sans-serif;
  fill: #2a2a66;
}
.confirm {
  position: absolute;
  top: 14px;
  right: 60px;
  display: flex;
  align-items: flex-end;
  gap: 8px;
}
.confirm svg {
  width: 52px;
  height: 54px;
}
.confirm .cancel {
  margin-bottom: -28px;
}
.confirm .cancel svg {
  width: 34px;
  height: 34px;
}
.edge {
  width: 7px;
  background: #6f717d;
  border-left: 2px solid #43444e;
}
.task-tabs {
  position: relative;
  float: right;
  width: 34px;
  margin-top: 59px;
}
.task-tabs button {
  display: grid;
  place-items: center;
  width: 34px;
  height: 33px;
  margin-bottom: 2px;
  border: 2px solid #7f818f;
  border-right: none;
  border-radius: 6px 0 0 6px;
  background: #b7b8c5;
}
.task-tabs .active {
  border-color: #f4f5fa;
  background: #f0f1f8;
}
.task-tabs .icon {
  width: 23px;
  height: 23px;
}

/* Bottom rows */
.study-tabs {
  display: flex;
  height: 24px;
  border-top: 2px solid #2b2c34;
  border-right: 7px solid #6f717d;
  border-bottom: 1px solid var(--line);
  background: #e3e4ee;
  font: 17px var(--tab);
  color: #3a3b46;
}
.study-nav {
  display: flex;
  width: 100px;
  padding: 1px 4px 2px 3px;
  color: #8d8e9c;
}
.study-nav button {
  display: grid;
  place-items: center;
  width: 23px;
  border: 1px solid #9c9dab;
  background: #b4b5c2;
}
.study-nav svg {
  width: 12px;
  height: 12px;
}
.study {
  height: 20px;
  padding: 0 21px 0 11px;
  border: solid var(--line);
  border-width: 0 2px 2px 0;
  background: #b9bac7;
  line-height: 18px;
}
.study.active {
  padding: 0 14px;
  border-left-width: 1px;
  background: #dfe1ec;
  font-weight: bold;
  color: #23242e;
}
.statusbar {
  display: flex;
  align-items: center;
  height: 29px;
  padding: 0 20px 0 3px;
  border-bottom: 2px solid #6d6e78;
  background: linear-gradient(#d6d8e6, #b6b8c8);
  font: 16px var(--tree);
  color: #23242e;
  white-space: nowrap;
}
.edition {
  flex: 1;
  font-size: 17px;
}
.coord-x {
  width: 94px;
}
.coord-y {
  width: 75px;
}
.coord-z {
  width: 55px;
}
.state {
  width: 136px;
}
.editing {
  width: 257px;
}
```
